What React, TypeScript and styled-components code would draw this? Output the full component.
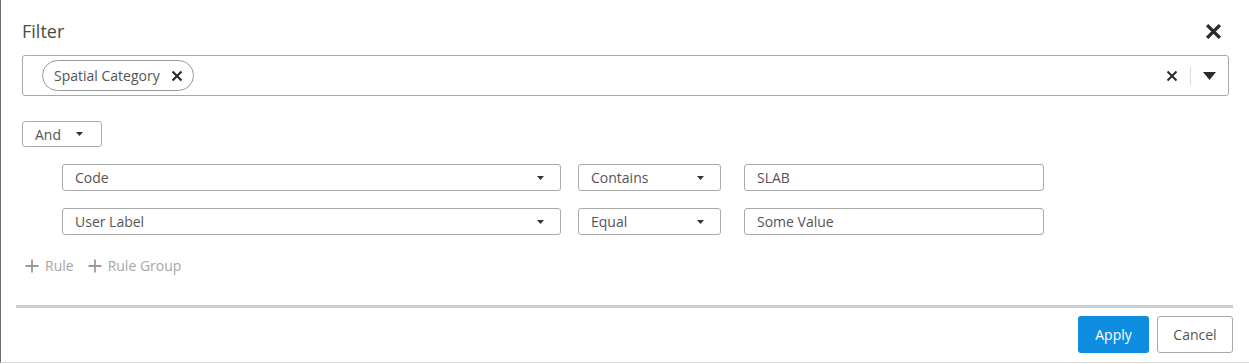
import React from "react";
import styled, { createGlobalStyle } from "styled-components";

const GlobalStyle = createGlobalStyle`
  body {
    margin: 0;
    background: #ffffff;
    font-family: "Open Sans", "Liberation Sans", Arial, sans-serif;
  }
`;

type Rule = { field: string; fieldWidth: number; op: string; value: string };

const rules: Rule[] = [
  { field: "Code", fieldWidth: 499, op: "Contains", value: "SLAB" },
  { field: "User Label", fieldWidth: 499, op: "Equal", value: "Some Value" },
];

const Cross = ({ size = 12, stroke = 2.2, color = "#333" }: { size?: number; stroke?: number; color?: string }) => (
  <svg width={size} height={size} viewBox="0 0 12 12">
    <path d="M1.5 1.5 L10.5 10.5 M10.5 1.5 L1.5 10.5" stroke={color} strokeWidth={stroke} strokeLinecap="butt" />
  </svg>
);

const Caret = ({ w = 8, h = 4, color = "#333" }: { w?: number; h?: number; color?: string }) => (
  <svg width={w} height={h} viewBox={`0 0 ${w} ${h}`}>
    <path d={`M0 0 L${w} 0 L${w / 2} ${h} Z`} fill={color} />
  </svg>
);

const Plus = () => (
  <svg width="14" height="14" viewBox="0 0 14 14">
    <path d="M7 0.5 V13.5 M0.5 7 H13.5" stroke="#9a9a9a" strokeWidth="1.8" />
  </svg>
);

function App() {
  return (
    <>
      <GlobalStyle />
      <Dialog>
        <Header>
          <Title>Filter</Title>
          <CloseButton>
            <Cross size={17} stroke={2.4} color="#2b2b2b" />
          </CloseButton>
        </Header>

        <MultiSelect>
          <Chip>
            Spatial Category
            <ChipRemove>
              <Cross size={12} stroke={2.2} color="#2b2b2b" />
            </ChipRemove>
          </Chip>
          <Indicators>
            <Cross size={12} stroke={2} color="#2b2b2b" />
            <Divider />
            <Caret w={13} h={8} color="#2b2b2b" />
          </Indicators>
        </MultiSelect>

        <Body>
          <Combinator>
            And
            <Caret w={7} h={4} />
          </Combinator>

          <RuleList>
            {rules.map((r) => (
              <RuleRow key={r.field}>
                <SelectBox $width={r.fieldWidth}>
                  <span>{r.field}</span>
                  <Caret w={7} h={4} />
                </SelectBox>
                <SelectBox $width={143}>
                  <span>{r.op}</span>
                  <Caret w={7} h={4} />
                </SelectBox>
                <ValueBox>{r.value}</ValueBox>
              </RuleRow>
            ))}
          </RuleList>

          <AddBar>
            <AddLink>
              <Plus />
              Rule
            </AddLink>
            <AddLink>
              <Plus />
              Rule Group
            </AddLink>
          </AddBar>
        </Body>

        <Separator />

        <Footer>
          <PrimaryButton>Apply</PrimaryButton>
          <SecondaryButton>Cancel</SecondaryButton>
        </Footer>
      </Dialog>
    </>
  );
}

const Dialog = styled.div`
  width: 1249px;
  height: 363px;
  box-sizing: border-box;
  border-left: 1px solid #6e6e6e;
  border-bottom: 1px solid #dcdcdc;
  display: flex;
  flex-direction: column;
  color: #555;
`;

const Header = styled.div`
  display: flex;
  align-items: center;
  justify-content: space-between;
  padding: 19px 27px 0 21px;
  height: 24px;
`;

const Title = styled.div`
  font-size: 18px;
  line-height: 24px;
  color: #4a4a4a;
`;

const CloseButton = styled.div`
  display: flex;
  align-items: center;
  margin-top: 1px;
`;

const MultiSelect = styled.div`
  margin: 12px 20px 0 21px;
  height: 41px;
  box-sizing: border-box;
  border: 1px solid #a9a9a9;
  border-radius: 3px;
  display: flex;
  align-items: center;
  justify-content: space-between;
  padding: 0 12px 0 19px;
`;

const Chip = styled.div`
  height: 31px;
  box-sizing: border-box;
  border: 1px solid #9a9a9a;
  border-radius: 16px;
  display: flex;
  align-items: center;
  gap: 11px;
  padding: 0 10px 0 11px;
  font-size: 14px;
  color: #555;
`;

const ChipRemove = styled.span`
  display: flex;
  align-items: center;
`;

const Indicators = styled.div`
  display: flex;
  align-items: center;
  gap: 12px;
`;

const Divider = styled.span`
  width: 1px;
  height: 18px;
  background: #dcdcdc;
`;

const Body = styled.div`
  padding: 25px 0 0 21px;
  display: flex;
  flex-direction: column;
  align-items: flex-start;
`;

const Combinator = styled.div`
  width: 80px;
  height: 26px;
  box-sizing: border-box;
  border: 1px solid #a9a9a9;
  border-radius: 3px;
  display: flex;
  align-items: center;
  gap: 15px;
  padding-left: 12px;
  font-size: 14px;
  color: #555;
`;

const RuleList = styled.div`
  display: flex;
  flex-direction: column;
  gap: 17px;
  margin: 17px 0 0 40px;
`;

const RuleRow = styled.div`
  display: flex;
  align-items: center;
`;

const SelectBox = styled.div<{ $width: number }>`
  width: ${(p) => p.$width}px;
  height: 27px;
  box-sizing: border-box;
  border: 1px solid #a9a9a9;
  border-radius: 3px;
  display: flex;
  align-items: center;
  justify-content: space-between;
  padding: 0 16px 0 12px;
  margin-right: 17px;
  font-size: 14px;
  color: #555;
`;

const ValueBox = styled.div`
  width: 300px;
  height: 27px;
  box-sizing: border-box;
  border: 1px solid #a9a9a9;
  border-radius: 3px;
  display: flex;
  align-items: center;
  padding-left: 12px;
  margin-left: 6px;
  font-size: 14px;
  color: #555;
`;

const AddBar = styled.div`
  display: flex;
  gap: 14px;
  margin: 22px 0 0 3px;
`;

const AddLink = styled.div`
  display: flex;
  align-items: center;
  gap: 6px;
  font-size: 14px;
  line-height: 18px;
  color: #a6a6a6;
`;

const Separator = styled.div`
  margin: 30px 16px 0 15px;
  height: 3px;
  background: #c9ced3;
`;

const Footer = styled.div`
  display: flex;
  justify-content: flex-end;
  gap: 8px;
  padding: 8px 16px 0 0;
`;

const PrimaryButton = styled.button`
  height: 37px;
  width: 71px;
  border: none;
  border-radius: 3px;
  background: #0f8de0;
  color: #fff;
  font-family: inherit;
  font-size: 14px;
  cursor: pointer;
`;

const SecondaryButton = styled.button`
  height: 37px;
  width: 76px;
  border: 1px solid #a9a9a9;
  border-radius: 3px;
  background: #fff;
  color: #555;
  font-family: inherit;
  font-size: 14px;
  cursor: pointer;
`;

export default App;
